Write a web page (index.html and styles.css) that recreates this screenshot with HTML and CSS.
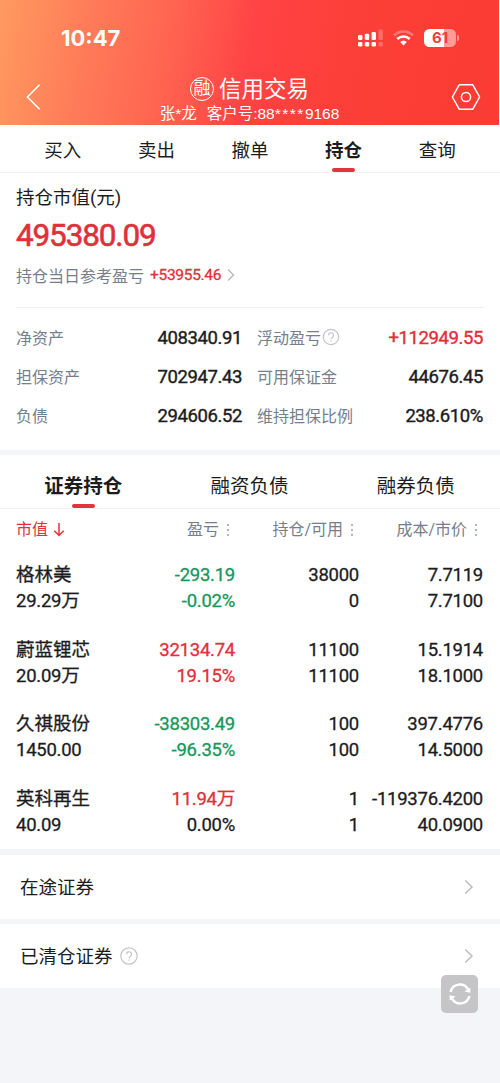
FILE: index.html
```
<!DOCTYPE html>
<html lang="zh-CN">
<head>
    <meta charset="UTF-8">
    <meta name="viewport" content="width=device-width, initial-scale=1.0">
    <title>信用交易</title>
    <link rel="stylesheet" href="styles.css">
</head>
<body>
    <header class="header">
        <div class="status-bar">
            <span class="time">10:47</span>
            <div class="status-icons">
                <svg width="25" height="18" viewBox="0 0 25 18" fill="#fff">
                    <rect x="0" y="6" width="4.4" height="5" rx="1.2"/>
                    <rect x="6.8" y="4.8" width="4.4" height="6.2" rx="1.2"/>
                    <rect x="13.6" y="3" width="4.4" height="8" rx="1.2"/>
                    <rect x="20.4" y="0.5" width="4.4" height="10.5" rx="1.2" opacity=".25"/>
                    <rect x="0" y="13" width="4.4" height="4.5" rx="1.2"/>
                    <rect x="6.8" y="13" width="4.4" height="4.5" rx="1.2"/>
                    <rect x="13.6" y="13" width="4.4" height="4.5" rx="1.2"/>
                    <rect x="20.4" y="13" width="4.4" height="4.5" rx="1.2" opacity=".25"/>
                </svg>
                <svg width="21" height="16" viewBox="0 0 21 16" fill="none" stroke="#fff" stroke-width="2.6">
                    <path d="M1 5.4a13.6 13.6 0 0 1 19 0" opacity=".3"/>
                    <path d="M4.3 9a9 9 0 0 1 12.4 0"/>
                    <path d="M7.2 12a4.8 4.8 0 0 1 6.6 0L10.5 15.4z" fill="#fff" stroke="none"/>
                </svg>
                <div class="battery"><span>61</span></div>
            </div>
        </div>
        <div class="nav">
            <svg class="back" width="16" height="28" viewBox="0 0 16 28" fill="none" stroke="#fff" stroke-width="1.6">
                <path d="M14.6 1.8 2.4 14 14.6 26.2"/>
            </svg>
            <div class="nav-title">
                <h1><span class="badge">融</span>信用交易</h1>
                <p>张*龙<span class="account">客户号:88<span class="mask">****</span>9168</span></p>
            </div>
            <svg class="settings" width="30" height="28" viewBox="0 0 30 28" fill="none" stroke="#fff" stroke-width="1.5">
                <path d="M8.2 1.8h13.6L28.6 14l-6.8 12.2H8.2L1.4 14z" stroke-linejoin="round"/>
                <circle cx="15" cy="14" r="4.6"/>
            </svg>
        </div>
    </header>

    <nav class="tabs">
        <span>买入</span>
        <span>卖出</span>
        <span>撤单</span>
        <span class="active">持仓</span>
        <span>查询</span>
    </nav>

    <section class="summary">
        <div class="summary-label">持仓市值(元)</div>
        <div class="total">495380.09</div>
        <div class="today">
            持仓当日参考盈亏<span class="num red">+53955.46</span>
            <svg width="8" height="14" viewBox="0 0 8 14" fill="none" stroke="#bbb" stroke-width="1.4"><path d="M1 1.5 6.5 7 1 12.5"/></svg>
        </div>
        <div class="assets">
            <span class="label">净资产</span>
            <span class="num">408340.91</span>
            <span class="label">浮动盈亏<svg class="help" width="18" height="18" viewBox="0 0 18 18" fill="none" stroke="#c4c4c8" stroke-width="1.2"><circle cx="9" cy="9" r="7.7"/><path d="M6.5 7.3a2.5 2.5 0 1 1 3.8 2.1c-.9.5-1.3.9-1.3 1.9"/><path d="M9 12.4v1.4"/></svg></span>
            <span class="num red">+112949.55</span>
            <span class="label">担保资产</span>
            <span class="num">702947.43</span>
            <span class="label">可用保证金</span>
            <span class="num">44676.45</span>
            <span class="label">负债</span>
            <span class="num">294606.52</span>
            <span class="label">维持担保比例</span>
            <span class="num">238.610%</span>
        </div>
    </section>

    <nav class="tabs sub-tabs">
        <span class="active">证券持仓</span>
        <span>融资负债</span>
        <span>融券负债</span>
    </nav>

    <section class="positions">
        <div class="row head">
            <span class="red">市值<svg class="sort" width="12" height="15" viewBox="0 0 12 15" fill="none" stroke="#e0353b" stroke-width="1.5"><path d="M6 1v12.5M1.3 8.8 6 13.5l4.7-4.7"/></svg></span>
            <span>盈亏<i class="dots"></i></span>
            <span>持仓/可用<i class="dots"></i></span>
            <span>成本/市价<i class="dots"></i></span>
        </div>
        <div class="row">
            <div><p class="name">格林美</p><p>29.29万</p></div>
            <div class="green"><p>-293.19</p><p>-0.02%</p></div>
            <div><p>38000</p><p>0</p></div>
            <div><p>7.7119</p><p>7.7100</p></div>
        </div>
        <div class="row">
            <div><p class="name">蔚蓝锂芯</p><p>20.09万</p></div>
            <div class="red"><p>32134.74</p><p>19.15%</p></div>
            <div><p>11100</p><p>11100</p></div>
            <div><p>15.1914</p><p>18.1000</p></div>
        </div>
        <div class="row">
            <div><p class="name">久祺股份</p><p>1450.00</p></div>
            <div class="green"><p>-38303.49</p><p>-96.35%</p></div>
            <div><p>100</p><p>100</p></div>
            <div><p>397.4776</p><p>14.5000</p></div>
        </div>
        <div class="row">
            <div><p class="name">英科再生</p><p>40.09</p></div>
            <div><p class="red">11.94万</p><p>0.00%</p></div>
            <div><p>1</p><p>1</p></div>
            <div><p>-119376.4200</p><p>40.0900</p></div>
        </div>
    </section>

    <div class="link">
        <span>在途证券</span>
        <svg class="arrow" width="10" height="16" viewBox="0 0 10 16" fill="none" stroke="#bcbcbc" stroke-width="1.5"><path d="M1.2 1.5 8 8l-6.8 6.5"/></svg>
    </div>
    <div class="link">
        <span>已清仓证券</span>
        <svg class="help" width="18" height="18" viewBox="0 0 18 18" fill="none" stroke="#c4c4c8" stroke-width="1.2"><circle cx="9" cy="9" r="8.2"/><path d="M6.5 7.3a2.5 2.5 0 1 1 3.8 2.1c-.9.5-1.3.9-1.3 1.9"/><path d="M9 12.4v1.4"/></svg>
        <svg class="arrow" width="10" height="16" viewBox="0 0 10 16" fill="none" stroke="#bcbcbc" stroke-width="1.5"><path d="M1.2 1.5 8 8l-6.8 6.5"/></svg>
    </div>

    <div class="refresh">
        <svg width="24" height="24" viewBox="0 0 24 24" fill="none" stroke="#fff" stroke-width="2.4">
            <path d="M2.6 10A9.4 9.4 0 0 1 20 7.4"/>
            <path d="M21.4 14A9.4 9.4 0 0 1 4 16.6"/>
            <path d="M22.4 5.4v5.4l-6-1.4z" fill="#fff" stroke="none"/>
            <path d="M1.6 18.6v-5.4l6 1.4z" fill="#fff" stroke="none"/>
        </svg>
    </div>
</body>
</html>
```
FILE: styles.css
```
* {
    box-sizing: border-box;
}
body {
    margin: 0;
    width: 500px;
    min-height: 1083px;
    background: #f4f5f9;
    color: #1c1c1e;
    font-family: Roboto, "Noto Sans CJK SC", sans-serif;
    font-size: 18px;
}
h1, p {
    margin: 0;
    font-weight: 400;
}
svg {
    flex-shrink: 0;
}
.red {
    color: #e0303a;
}
.green {
    color: #16985c;
}

/* header */
.header {
    width: 499px;
    height: 125px;
    color: #fff;
    background: linear-gradient(100deg, #ff9a60 0%, #ff7b58 18%, #ff6451 34%, #ff4344 50%, #fc3f38 68%, #fb3b34 100%);
    box-shadow: 1px 0 #fff;
}
.status-bar {
    display: flex;
    justify-content: space-between;
    height: 75px;
    padding: 0 43px 0 61px;
    align-items: center;
}
.time {
    font-family: Inter, sans-serif;
    font-size: 22px;
    font-weight: 700;
}
.status-icons {
    display: flex;
    align-items: center;
    gap: 10px;
}
.battery {
    position: relative;
    width: 32px;
    height: 18px;
    border-radius: 5.5px;
    background: linear-gradient(90deg, #fff 62%, #ff9c98 62%);
    color: #f0403a;
    font: 700 15px/18px Inter, sans-serif;
    text-align: center;
}
.battery::after {
    content: "";
    position: absolute;
    right: -3px;
    top: 6px;
    width: 2px;
    height: 6px;
    border-radius: 0 2px 2px 0;
    background: #ff9c98;
}
.nav {
    display: flex;
    justify-content: space-between;
    padding: 0 18px 0 25px;
}
.back, .settings {
    margin-top: 8px;
}
.nav-title {
    padding-left: 7px;
    text-align: center;
}
.nav-title h1 {
    display: flex;
    align-items: center;
    justify-content: center;
    gap: 5px;
    height: 28px;
    font-size: 22.5px;
    line-height: 26px;
}
.badge {
    width: 24px;
    height: 24px;
    border: 1px solid #fff;
    border-radius: 50%;
    font-size: 17px;
    line-height: 21px;
    text-align: center;
}
.nav-title p {
    font: 15.5px/21px "Liberation Sans", "Noto Sans CJK SC", sans-serif;
}
.account {
    margin-left: 10px;
}
.mask {
    letter-spacing: 1.5px;
}

/* tabs */
.tabs {
    display: flex;
    height: 48px;
    padding: 0 16px;
    background: #fff;
    border-bottom: 1px solid #f1f1f3;
    font-size: 18.5px;
    line-height: 52px;
    text-align: center;
}
.tabs span {
    flex: 1;
    position: relative;
}
.tabs .active {
    font-weight: 700;
}
.tabs .active::after {
    content: "";
    position: absolute;
    left: 50%;
    bottom: 0;
    width: 23px;
    height: 4px;
    margin-left: -11.5px;
    border-radius: 2px;
    background: #e0353b;
}
.sub-tabs {
    height: 54px;
    margin-top: 5px;
    padding: 0 1px 0 0;
    font-size: 19.5px;
    line-height: 63px;
}

/* summary */
.summary {
    height: 277px;
    padding: 11px 16px 0;
    background: #fff;
}
.summary-label {
    font-size: 18.5px;
    line-height: 29px;
}
.total {
    height: 45px;
    color: #e0303a;
    font-size: 31.5px;
    line-height: 45px;
    letter-spacing: -1.15px;
    -webkit-text-stroke: .6px;
}
.today {
    display: flex;
    align-items: center;
    height: 34px;
    color: #767e8c;
    font-size: 16px;
}
.today .num {
    margin: 0 6px;
    font-size: 15.5px;
    letter-spacing: -.3px;
    -webkit-text-stroke: .3px;
}
.assets {
    display: grid;
    grid-template-columns: 90px 136px 112px 129px;
    grid-auto-rows: 39px;
    align-items: center;
    margin-top: 15px;
    padding-top: 10px;
    border-top: 1px solid #f1f1f3;
}
.assets .num {
    font-size: 18.5px;
    letter-spacing: -.4px;
    text-align: right;
    -webkit-text-stroke: .4px;
}
.assets .num + .label {
    margin-left: 15px;
}
.assets .label:nth-child(4n+1) {
    margin-left: 0;
}
.label {
    display: flex;
    align-items: center;
    height: 24px;
    margin-top: -2px;
    color: #767e8c;
    font-size: 16px;
    white-space: nowrap;
}
.label .help {
    margin: 1px 0 0 1px;
}

/* positions */
.positions {
    height: 340px;
    padding: 0 16px;
    background: #fff;
}
.row {
    display: grid;
    grid-template-columns: 95px 124px 124px 124px;
    height: 74.7px;
    text-align: right;
    line-height: 26px;
}
.row > :first-child {
    text-align: left;
}
.row p {
    font-size: 18.5px;
    letter-spacing: -.25px;
    -webkit-text-stroke: .3px;
}
.row .name {
    letter-spacing: 0;
}
.head {
    height: 53px;
    color: #767e8c;
    font-size: 16px;
    line-height: 42px;
}
.sort {
    margin-left: 5px;
    vertical-align: -2px;
}
.dots {
    display: inline-block;
    width: 2px;
    height: 12px;
    margin: 0 6px 0 8px;
    vertical-align: -1px;
    background: repeating-linear-gradient(#b4b7c0 0 2px, transparent 2px 5px);
}

/* links */
.link {
    display: flex;
    align-items: center;
    height: 64px;
    margin-top: 5px;
    padding: 0 26px 0 20px;
    background: #fff;
    font-size: 18.5px;
}
.link span {
    margin-top: -2px;
}
.positions + .link {
    margin-top: 6px;
}
.link .help {
    margin-left: 7px;
}
.arrow {
    margin-left: auto;
}
.refresh {
    position: fixed;
    left: 441px;
    top: 975px;
    display: flex;
    align-items: center;
    justify-content: center;
    width: 37px;
    height: 38px;
    border-radius: 5px;
    background: #c5c5c7;
}
```
